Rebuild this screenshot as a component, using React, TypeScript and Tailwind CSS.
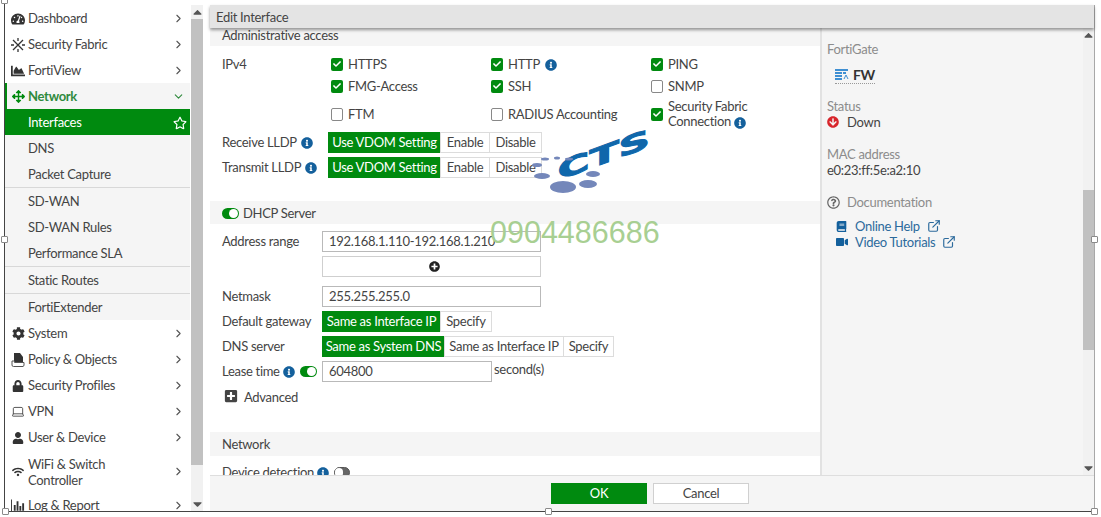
import type { ReactNode } from 'react';
import {
  FaArrowCircleDown,
  FaArrowsAlt,
  FaBook,
  FaCaretDown,
  FaCaretUp,
  FaChartArea,
  FaCheck,
  FaCog,
  FaInfoCircle,
  FaLock,
  FaPlusCircle,
  FaPlusSquare,
  FaRegQuestionCircle,
  FaRegStar,
  FaTachometerAlt,
  FaUser,
  FaVideo,
  FaWifi,
} from 'react-icons/fa';
import { ChevronDown, ChevronRight, ExternalLink, Laptop } from 'lucide-react';

function FabricIcon() {
  return (
    <svg width="14" height="14" viewBox="0 0 14 14" stroke="#333" strokeWidth="1.3" fill="none">
      <path d="M2 2l10 10M12 2L2 12M7 0v3M7 11v3M0 7h3M11 7h3" />
    </svg>
  );
}

function PolicyIcon() {
  return (
    <svg width="14" height="14" viewBox="0 0 14 14">
      <path d="M3 0h6l3 4v5H3z" fill="#333" />
      <path d="M1 8v4a1.5 1.5 0 0 0 1.5 1.5H12a1.5 1.5 0 0 0 1-1.5V9.500H3.500V8z" fill="none" stroke="#555" />
    </svg>
  );
}

function LogIcon() {
  return (
    <svg width="15" height="14" viewBox="0 0 15 14" fill="#333">
      <path d="M0 0h1v13h14v1H0z" />
      <path d="M3 6h2v6H3zM6 2h2v10H6zM9 7h2v5H9zM12 4h2v8h-2z" />
    </svg>
  );
}

function NavItem({ icon, label, tall }: { icon: ReactNode; label: ReactNode; tall?: boolean }) {
  return (
    <div className={`flex items-center pt-[1px] pl-[6px] pr-[5px] ${tall ? 'h-[42px] leading-[16px]' : 'h-[26px]'}`}>
      <span className="w-[17px] pr-[3px] flex justify-center text-[#333]">{icon}</span>
      <span className="flex-1">{label}</span>
      <ChevronRight size={13} className="text-[#555]" />
    </div>
  );
}

function SubItem({ label }: { label: string }) {
  return <div className="h-[26px] leading-[26px] pl-[23px]">{label}</div>;
}

function Check({ on, label, wide }: { on?: boolean; label: ReactNode; wide?: boolean }) {
  return (
    <div className="flex items-center w-[160px] leading-[15px]">
      {on ? (
        <span className="w-[12px] h-[13px] rounded-[2px] bg-[#008a0f] flex items-center justify-center shrink-0">
          <FaCheck size={8} className="text-white" />
        </span>
      ) : (
        <span className="w-[12px] h-[13px] rounded-[2px] border border-[#888] bg-white shrink-0" />
      )}
      <span className={wide ? 'ml-[5px]' : 'ml-[5px] whitespace-nowrap'}>{label}</span>
    </div>
  );
}

function Info({ className = '' }: { className?: string }) {
  return <FaInfoCircle size={12} className={`inline-block text-[#14609c] ${className}`} />;
}

function Segments({ items, widths }: { items: string[]; widths: string[] }) {
  return (
    <div className="flex h-[21px]">
      {items.map((item, i) => (
        <div
          key={item}
          className={`flex items-center justify-center whitespace-nowrap ${widths[i]} ${
            i === 0 ? 'bg-[#008a0f] text-white' : 'bg-white border border-[#dcdcdc] -ml-px first:ml-0'
          }`}
        >
          {item}
        </div>
      ))}
    </div>
  );
}

function Toggle({ on }: { on?: boolean }) {
  return on ? (
    <span className="inline-flex w-[17px] h-[11px] rounded-full bg-[#008a0f] items-center justify-end pr-[1px]">
      <span className="w-[9px] h-[9px] rounded-full bg-white" />
    </span>
  ) : (
    <span className="inline-flex w-[16px] h-[11px] rounded-full border border-[#555] bg-[#666] items-center">
      <span className="w-[8px] h-[9px] rounded-full bg-white" />
    </span>
  );
}

function SectionTitle({ children, className = '' }: { children: ReactNode; className?: string }) {
  return <div className={`bg-[#f5f5f5] pl-[12px] flex items-center ${className}`}>{children}</div>;
}

function TextBox({ value, className = '' }: { value?: ReactNode; className?: string }) {
  return (
    <div className={`h-[21px] border border-[#b9b9b9] bg-white pl-[6px] flex items-center ${className}`}>{value}</div>
  );
}

function Handle({ className }: { className: string }) {
  return <span className={`absolute w-[7px] h-[7px] rounded-[1px] border border-[#8a8a8a] bg-white ${className}`} />;
}

function Sidebar() {
  return (
    <div className="w-[185px] pt-[5px] shrink-0 overflow-hidden">
      <NavItem icon={<FaTachometerAlt size={14} />} label="Dashboard" />
      <NavItem icon={<FabricIcon />} label="Security Fabric" />
      <NavItem icon={<FaChartArea size={14} />} label="FortiView" />
      <div className="h-[26px] pt-[1px] bg-[#f5f5f5] border-l-2 border-[#008a0f] flex items-center pl-[4px] pr-[5px] text-[#2f8a3d]">
        <span className="w-[17px] pr-[3px] flex justify-center text-[#008a0f]">
          <FaArrowsAlt size={13} />
        </span>
        <span className="flex-1 font-bold">Network</span>
        <ChevronDown size={13} />
      </div>
      <div className="h-[26px] pt-[1px] bg-[#008a0f] text-white flex items-center pl-[23px] pr-[3px] justify-between">
        Interfaces
        <FaRegStar size={14} />
      </div>
      <div className="bg-[#f5f5f5]">
        <SubItem label="DNS" />
        <SubItem label="Packet Capture" />
        <div className="border-t border-[#d8d8d8]" />
        <SubItem label="SD-WAN" />
        <SubItem label="SD-WAN Rules" />
        <SubItem label="Performance SLA" />
        <div className="border-t border-[#d8d8d8]" />
        <SubItem label="Static Routes" />
        <div className="border-t border-[#d8d8d8]" />
        <SubItem label="FortiExtender" />
      </div>
      <NavItem icon={<FaCog size={13} />} label="System" />
      <NavItem icon={<PolicyIcon />} label="Policy & Objects" />
      <NavItem icon={<FaLock size={12} />} label="Security Profiles" />
      <NavItem icon={<Laptop size={15} strokeWidth={1.4} />} label="VPN" />
      <NavItem icon={<FaUser size={12} />} label="User & Device" />
      <NavItem icon={<FaWifi size={12} />} label={<>WiFi &amp; Switch<br />Controller</>} tall />
      <NavItem icon={<LogIcon />} label="Log & Report" />
    </div>
  );
}

function Scrollbar({ className, thumb }: { className: string; thumb: string }) {
  return (
    <div className={`flex flex-col items-center bg-[#f1f1f1] shrink-0 ${className}`}>
      <FaCaretUp size={9} className="h-[14px] text-[#555] shrink-0" />
      <div className={`w-full ${thumb}`} />
      <div className="flex-1" />
      <FaCaretDown size={9} className="h-[14px] text-[#555] shrink-0" />
    </div>
  );
}

function AdminAccess() {
  return (
    <div className="h-[155px]">
      <SectionTitle className="h-[18px] overflow-hidden items-start leading-[14px]">Administrative access</SectionTitle>
      <div className="relative pl-[12px] pt-[7px] flex">
        <div className="w-[109px] leading-[22px]">IPv4</div>
        <div className="flex flex-col">
          <div className="flex h-[22px]">
            <Check on label="HTTPS" />
            <Check on label={<>HTTP <Info className="ml-[2px]" /></>} />
            <Check on label="PING" />
          </div>
          <div className="flex h-[22px]">
            <Check on label="FMG-Access" />
            <Check on label="SSH" />
            <Check label="SNMP" />
          </div>
          <div className="flex mt-[2px]">
            <Check label="FTM" />
            <Check label="RADIUS Accounting" />
            <Check on wide label={<>Security Fabric<br />Connection <Info /></>} />
          </div>
        </div>
      </div>
      <div className="pl-[12px] mt-[1px] flex items-center h-[25px]">
        <div className="w-[106px] flex items-center whitespace-nowrap">Receive LLDP <Info className="ml-[4px]" /></div>
        <Segments items={['Use VDOM Setting', 'Enable', 'Disable']} widths={['w-[113px]', 'w-[50px]', 'w-[53px]']} />
      </div>
      <div className="pl-[12px] flex items-center h-[25px]">
        <div className="w-[106px] flex items-center whitespace-nowrap">Transmit LLDP <Info className="ml-[4px]" /></div>
        <Segments items={['Use VDOM Setting', 'Enable', 'Disable']} widths={['w-[113px]', 'w-[50px]', 'w-[53px]']} />
      </div>
    </div>
  );
}

function DhcpServer() {
  return (
    <div className="mt-[18px]">
      <SectionTitle className="h-[23px] pt-[2px]">
        <Toggle on />
        <span className="ml-[4px]">DHCP Server</span>
      </SectionTitle>
      <div className="pl-[12px] pt-[7px]">
        <div className="flex items-center h-[21px]">
          <div className="w-[100px]">Address range</div>
          <TextBox value="192.168.1.110-192.168.1.210" className="w-[219px]" />
        </div>
        <div className="flex items-center h-[21px] mt-[4px]">
          <div className="w-[100px]" />
          <TextBox
            className="w-[219px] justify-center border-[#cfcfcf] pl-0"
            value={<FaPlusCircle size={11} className="text-[#222]" />}
          />
        </div>
        <div className="flex items-center h-[21px] mt-[9px]">
          <div className="w-[100px]">Netmask</div>
          <TextBox value="255.255.255.0" className="w-[219px]" />
        </div>
        <div className="flex items-center h-[21px] mt-[4px]">
          <div className="w-[100px]">Default gateway</div>
          <Segments items={['Same as Interface IP', 'Specify']} widths={['w-[119px]', 'w-[52px]']} />
        </div>
        <div className="flex items-center h-[21px] mt-[4px]">
          <div className="w-[100px]">DNS server</div>
          <Segments
            items={['Same as System DNS', 'Same as Interface IP', 'Specify']}
            widths={['w-[123px]', 'w-[120px]', 'w-[51px]']}
          />
        </div>
        <div className="flex h-[21px] mt-[4px]">
          <div className="w-[100px] flex items-center whitespace-nowrap">
            Lease time <Info className="ml-[3px]" />
            <span className="ml-[5px] flex">
              <Toggle on />
            </span>
          </div>
          <TextBox value="604800" className="w-[170px]" />
          <span className="ml-[2px] -mt-[2px] leading-[20px]">second(s)</span>
        </div>
        <div className="flex items-center mt-[6px] pl-[2px] h-[20px]">
          <FaPlusSquare size={14} className="text-[#444] -mt-[4px]" />
          <span className="ml-[6px]">Advanced</span>
        </div>
      </div>
    </div>
  );
}

function Details() {
  return (
    <div className="flex-1 bg-[#f5f5f5] border-l-2 border-[#e2e2e2] pl-[5px] pt-[13px] leading-[16px]">
      <div className="text-[#8c8c8c]">FortiGate</div>
      <div className="mt-[9px] ml-[8px] inline-flex items-center border-b border-dotted border-[#999] h-[18px] pr-0">
        <svg width="14" height="11" viewBox="0 0 14 11">
          <path d="M0 0h13v2H0zM0 3h7v2H0zM8 3h3v2H8zM0 6h7v2H0zM0 9h7v2H0z" fill="#3f8fd2" />
          <path d="M9 10l2-4 2 4" stroke="#3f8fd2" fill="none" />
        </svg>
        <span className="ml-[4px] font-bold text-[#333] text-[14px]">FW</span>
      </div>
      <div className="text-[#8c8c8c] mt-[14px]">Status</div>
      <div className="flex items-center">
        <FaArrowCircleDown size={12} className="text-[#d8262c]" />
        <span className="ml-[8px]">Down</span>
      </div>
      <div className="text-[#8c8c8c] mt-[16px]">MAC address</div>
      <div>e0:23:ff:5e:a2:10</div>
      <div className="flex items-center mt-[16px] text-[#8c8c8c]">
        <FaRegQuestionCircle size={13} className="text-[#666]" />
        <span className="ml-[7px]">Documentation</span>
      </div>
      <div className="mt-[8px] ml-[9px] text-[#2c6a9c]">
        <div className="flex items-center">
          <FaBook size={11} className="text-[#14609c]" />
          <span className="ml-[8px]">Online Help</span>
          <ExternalLink size={14} className="ml-[7px]" />
        </div>
        <div className="flex items-center">
          <FaVideo size={12} className="text-[#14609c]" />
          <span className="ml-[7px]">Video Tutorials</span>
          <ExternalLink size={14} className="ml-[7px]" />
        </div>
      </div>
    </div>
  );
}

function Watermark() {
  return (
    <>
      <span className="absolute left-[490px] top-[215px] text-[30.500px] leading-[34px] tracking-normal text-[#a8cf92] font-['Liberation_Sans',sans-serif]">
        0904486686
      </span>
      <span className="absolute left-[574px] top-[141px] w-[60px] h-[28px] text-center text-[24px] leading-[28px] font-bold italic tracking-normal text-[#0f67ab] [-webkit-text-stroke:1px_#0f67ab] -rotate-[20deg] scale-x-[1.9] font-['DejaVu_Sans',sans-serif]">
        CTS
      </span>
      <svg className="absolute left-[530px] top-[150px]" width="75" height="46" viewBox="0 0 75 46" fill="#7487ba">
        <ellipse cx="15" cy="9" rx="4" ry="1.500" />
        <ellipse cx="27" cy="8" rx="3" ry="1.500" />
        <ellipse cx="39" cy="9" rx="4" ry="1.500" />
        <ellipse cx="7" cy="15" rx="5" ry="2" />
        <ellipse cx="12" cy="26" rx="8" ry="3" />
        <ellipse cx="63" cy="24" rx="7" ry="3" />
        <ellipse cx="58" cy="34" rx="9" ry="4" />
        <ellipse cx="33" cy="37" rx="13" ry="6" />
      </svg>
    </>
  );
}

export default function App() {
  return (
    <div className="relative w-[1101px] h-[517px] bg-white overflow-hidden pl-[4px] text-[13px] tracking-[-0.3px] text-[#444] font-['Lato',sans-serif]">
      <div className="flex h-[512px] w-[1091px] border-l border-b border-[#444]">
        <Sidebar />
        <Scrollbar className="w-[12px] ml-[1px] mt-[5px] h-[506px]" thumb="h-[446px] bg-[#c1c1c1]" />
        <div className="w-[7px]" />
        <div className="flex-1 mt-[5px] flex flex-col min-w-0 border-r border-[#a8a8a8]">
          <div className="h-[23px] shrink-0 bg-[#e4e4e4] pl-[6px] pt-[2px] flex items-center shadow-[0_2px_3px_rgba(0,0,0,0.4)] z-10">
            Edit Interface
          </div>
          <div className="flex h-[448px] shrink-0 border-b border-[#dedede]">
            <div className="w-[610px] shrink-0 overflow-hidden">
              <AdminAccess />
              <DhcpServer />
              <div className="mt-[24px]">
                <SectionTitle className="h-[24px] pt-[1px]">Network</SectionTitle>
                <div className="pl-[12px] mt-[8px] flex items-center h-[17px] whitespace-nowrap">
                  Device detection <Info className="ml-[3px]" />
                  <span className="ml-[5px] flex">
                    <Toggle />
                  </span>
                </div>
              </div>
            </div>
            <Details />
            <Scrollbar className="w-[11px]" thumb="h-[160px] mt-[148px] bg-[#c1c1c1]" />
          </div>
          <div className="flex-1 bg-[#f5f5f5] flex items-center pl-[341px] gap-[6px]">
            <div className="w-[96px] h-[21px] bg-[#008a0f] text-white flex items-center justify-center">OK</div>
            <div className="w-[96px] h-[21px] bg-white border border-[#d0d0d0] flex items-center justify-center">
              Cancel
            </div>
          </div>
        </div>
      </div>
      <Watermark />
      <Handle className="left-[1px] top-[-3px]" />
      <Handle className="left-[1px] top-[236px]" />
      <Handle className="left-[2px] top-[508px]" />
      <Handle className="left-[545px] top-[508px]" />
      <Handle className="left-[1091px] top-[508px]" />
      <Handle className="left-[1091px] top-[236px]" />
    </div>
  );
}
